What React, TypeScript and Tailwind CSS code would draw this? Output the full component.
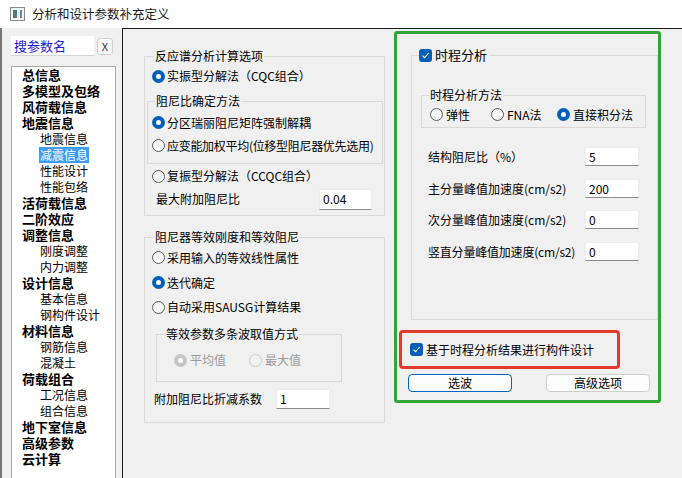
import React from "react";

function Radio({ checked = false, disabled = false }: { checked?: boolean; disabled?: boolean }) {
  if (checked) {
    return (
      <span
        className={`inline-flex w-[13px] h-[13px] rounded-full items-center justify-center shrink-0 ${
          disabled ? "bg-[#c6c6c6]" : "bg-[#005fb8]"
        }`}
      >
        <span className="w-[5px] h-[5px] rounded-full bg-white" />
      </span>
    );
  }
  return (
    <span
      className={`inline-block w-[13px] h-[13px] rounded-full border shrink-0 ${
        disabled ? "border-[#cacaca] bg-[#f3f3f3]" : "border-[#5c5c5c] bg-[#f7f7f7]"
      }`}
    />
  );
}

function Check() {
  return (
    <span className="inline-flex w-[13px] h-[13px] rounded-[3px] bg-[#005fb8] items-center justify-center shrink-0">
      <svg width="9" height="9" viewBox="0 0 9 9">
        <path d="M1.5 4.6 L3.6 6.6 L7.6 2.2" stroke="white" strokeWidth="1.1" fill="none" />
      </svg>
    </span>
  );
}

function Input({ value, w, h = 19 }: { value: string; w: string; h?: number }) {
  return (
    <div
      className={`${w} ${h === 21 ? "h-[21px]" : h === 20 ? "h-[20px]" : "h-[19px]"} bg-white border border-[#ececec] border-b-[#8c8c8c] flex items-center pl-[3px] text-[12px] leading-none text-black`}
    >
      {value}
    </div>
  );
}

const tree: [string, number, boolean?][] = [
  ["总信息", 0],
  ["多模型及包络", 0],
  ["风荷载信息", 0],
  ["地震信息", 0],
  ["地震信息", 1],
  ["减震信息", 1, true],
  ["性能设计", 1],
  ["性能包络", 1],
  ["活荷载信息", 0],
  ["二阶效应", 0],
  ["调整信息", 0],
  ["刚度调整", 1],
  ["内力调整", 1],
  ["设计信息", 0],
  ["基本信息", 1],
  ["钢构件设计", 1],
  ["材料信息", 0],
  ["钢筋信息", 1],
  ["混凝土", 1],
  ["荷载组合", 0],
  ["工况信息", 1],
  ["组合信息", 1],
  ["地下室信息", 0],
  ["高级参数", 0],
  ["云计算", 0],
];

export default function App() {
  return (
    <div className="w-[682px] h-[478px] overflow-hidden bg-[#f0f0f0] text-black text-[12px] font-['Noto_Sans_CJK_SC',sans-serif] flex flex-col">
      {/* Title bar */}
      <div className="h-[28px] bg-white flex items-center shrink-0">
        <div className="ml-[10px] w-[15px] h-[14px] border border-[#8a8a8a] bg-[#f4f4f4] flex items-stretch p-[2px] gap-[1px]">
          <div className="w-[4px] bg-[#4d7b73]" />
          <div className="flex-1 bg-[#dfe6ea]" />
          <div className="w-[2px] bg-[#6a8aa8]" />
        </div>
        <span className="ml-[7px] text-[12.5px] leading-none text-[#1a1a1a]">分析和设计参数补充定义</span>
      </div>

      <div className="flex flex-1 min-h-0">
        {/* Left column */}
        <div className="w-[122px] shrink-0 border-l-2 border-[#777777] flex flex-col">
          <div className="flex items-center mt-[8px] ml-[9px]">
            <div className="w-[83px] h-[20px] bg-white border-b border-[#d6d6d6] flex items-center pl-[3px] text-[13px] text-[#1c1cd6] leading-none">
              搜参数名
            </div>
            <div className="ml-[3px] w-[16px] h-[17px] bg-[#fdfdfd] border border-[#d0d0d0] rounded-[3px] flex items-center justify-center text-[11px] leading-none text-[#333]">
              X
            </div>
          </div>
          <div className="mt-[10px] ml-[9px] w-[105px] flex-1 bg-white border border-[#a8a8a8] border-b-0">
            {tree.map(([t, lvl, sel], i) => (
              <div
                key={i}
                className={`h-[16px] flex items-center ${lvl === 0 ? "pl-[9px]" : "pl-[27px]"}`}
              >
                <span
                  className={`leading-[16px] px-[1px] ${
                    lvl === 0 ? "text-[13px] font-bold" : "text-[12px]"
                  } ${sel ? "bg-[#3d9cf2] text-white" : ""}`}
                >
                  {t}
                </span>
              </div>
            ))}
          </div>
        </div>

        {/* Main panel */}
        <div className="flex-1 border-l border-t border-[#1a1a1a] flex pl-[21px]">
          {/* Left groups */}
          <div className="w-[241px] flex flex-col">
            <fieldset className="mt-[19px] h-[168px] border border-[#d9d9d9] pl-[2px]">
              <legend className="ml-[7px] px-[1px] leading-[16px]">反应谱分析计算选项</legend>
              <div className="h-[24px] flex items-center pl-[5px] gap-[2px]">
                <Radio checked />
                <span>实振型分解法（CQC组合）</span>
              </div>
              <fieldset className="mt-[5px] w-[236px] h-[71px] border border-[#d9d9d9]">
                <legend className="ml-[7px] px-[1px] leading-[16px]">阻尼比确定方法</legend>
                <div className="mt-[2px] h-[23px] flex items-center pl-[4px] gap-[2px]">
                  <Radio checked />
                  <span>分区瑞丽阻尼矩阵强制解耦</span>
                </div>
                <div className="h-[23px] flex items-center pl-[4px] gap-[2px]">
                  <Radio />
                  <span className="whitespace-nowrap tracking-[-0.3px]">应变能加权平均(位移型阻尼器优先选用)</span>
                </div>
              </fieldset>
              <div className="h-[24px] flex items-center pl-[5px] gap-[2px]">
                <Radio />
                <span>复振型分解法（CCQC组合）</span>
              </div>
              <div className="h-[22px] flex items-center pl-[9px]">
                <span className="w-[163px]">最大附加阻尼比</span>
                <Input value="0.04" w="w-[53px]" h={21} />
              </div>
            </fieldset>

            <fieldset className="mt-[13px] h-[194px] border border-[#d9d9d9] pl-[2px]">
              <legend className="ml-[7px] px-[1px] leading-[16px]">阻尼器等效刚度和等效阻尼</legend>
              <div className="h-[25px] flex items-center pl-[5px] gap-[2px]">
                <Radio />
                <span>采用输入的等效线性属性</span>
              </div>
              <div className="h-[25px] flex items-center pl-[5px] gap-[2px]">
                <Radio checked />
                <span>迭代确定</span>
              </div>
              <div className="h-[24px] flex items-center pl-[5px] gap-[2px]">
                <Radio />
                <span>自动采用SAUSG计算结果</span>
              </div>
              <fieldset className="mt-[7px] ml-[9px] w-[186px] h-[56px] border border-[#d9d9d9]">
                <legend className="ml-[8px] px-[1px] leading-[16px]">等效参数多条波取值方式</legend>
                <div className="mt-[6px] h-[24px] flex items-center pl-[17px] text-[#9a9a9a]">
                  <div className="w-[75px] flex items-center gap-[3px]">
                    <Radio checked disabled />
                    <span>平均值</span>
                  </div>
                  <div className="flex items-center gap-[3px]">
                    <Radio disabled />
                    <span>最大值</span>
                  </div>
                </div>
              </fieldset>
              <div className="mt-[7px] h-[20px] flex items-center pl-[7px]">
                <span className="w-[122px]">附加阻尼比折减系数</span>
                <Input value="1" w="w-[54px]" h={20} />
              </div>
            </fieldset>
          </div>

          {/* Right green box */}
          <div className="ml-[9px] mt-[2px] w-[267px] h-[372px] border-[3px] border-[#2fa637] rounded-[3px] flex flex-col">
            <fieldset className="mt-[13px] ml-[14px] w-[247px] h-[273px] border border-[#d9d9d9]">
              <legend className="ml-[7px] pr-[2px] leading-[16px] flex items-center gap-[3px]">
                <Check />
                <span className="text-[13px]">时程分析</span>
              </legend>
              <fieldset className="mt-[24px] ml-[9px] w-[225px] h-[41px] border border-[#d9d9d9]">
                <legend className="ml-[7px] px-[1px] leading-[16px]">时程分析方法</legend>
                <div className="h-[23px] flex items-center pl-[8px]">
                  <div className="w-[61px] flex items-center gap-[3px]">
                    <Radio />
                    <span>弹性</span>
                  </div>
                  <div className="w-[66px] flex items-center gap-[3px]">
                    <Radio />
                    <span>FNA法</span>
                  </div>
                  <div className="flex items-center gap-[3px]">
                    <Radio checked />
                    <span>直接积分法</span>
                  </div>
                </div>
              </fieldset>
              <div className="mt-[19px] h-[19px] flex items-center pl-[16px]">
                <span className="w-[157px]">结构阻尼比（%）</span>
                <Input value="5" w="w-[54px]" />
              </div>
              <div className="mt-[13px] h-[19px] flex items-center pl-[16px]">
                <span className="w-[157px]">主分量峰值加速度(cm/s2)</span>
                <Input value="200" w="w-[54px]" />
              </div>
              <div className="mt-[12px] h-[19px] flex items-center pl-[16px]">
                <span className="w-[157px]">次分量峰值加速度(cm/s2)</span>
                <Input value="0" w="w-[54px]" />
              </div>
              <div className="mt-[13px] h-[19px] flex items-center pl-[16px]">
                <span className="w-[157px] whitespace-nowrap tracking-[-0.2px]">竖直分量峰值加速度(cm/s2)</span>
                <Input value="0" w="w-[54px]" />
              </div>
            </fieldset>

            <div className="mt-[10px] ml-[2px] w-[221px] h-[39px] border-[3px] border-[#e33a2e] rounded-[4px] flex items-center pl-[8px] gap-[3px]">
              <Check />
              <span>基于时程分析结果进行构件设计</span>
            </div>

            <div className="mt-[5px] ml-[11px] flex gap-[34px]">
              <div className="w-[104px] h-[18px] bg-[#fdfdfd] border border-[#0067c0] rounded-[4px] flex items-center justify-center leading-none">
                选波
              </div>
              <div className="w-[104px] h-[18px] bg-[#fdfdfd] border border-[#cfcfcf] rounded-[4px] flex items-center justify-center leading-none">
                高级选项
              </div>
            </div>
          </div>
        </div>
      </div>
    </div>
  );
}
